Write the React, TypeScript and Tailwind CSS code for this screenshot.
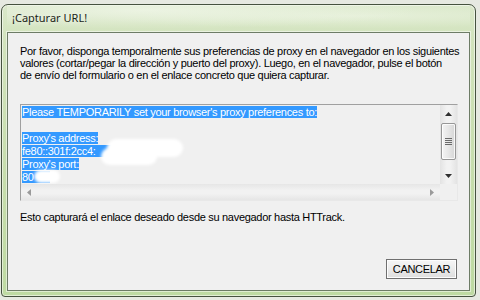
import type { ReactNode } from "react";

const sans = "font-['Liberation_Sans',Arial,sans-serif]";

const Sel = ({ children }: { children: ReactNode }) => (
  <span className="bg-[#3399ff] text-white">{children}</span>
);

const Arrow = ({ dir, gray }: { dir: "up" | "down" | "left" | "right"; gray?: boolean }) => {
  const pts = {
    up: "0,4 7,4 3.5,0",
    down: "0,0 7,0 3.5,4",
    left: "4,0 4,7 0,3.5",
    right: "0,0 0,7 4,3.5",
  }[dir];
  const vert = dir === "up" || dir === "down";
  return (
    <svg width={vert ? 7 : 4} height={vert ? 4 : 7} className="block">
      <polygon points={pts} fill={gray ? "#9a9a9a" : "#303030"} />
    </svg>
  );
};

export default function App() {
  return (
    <div className="w-[480px] h-[300px] bg-[#e6e9e1] pt-[4px] pl-[1px] overflow-hidden">
      {/* window frame */}
      <div className="w-[475px] h-[293px] flex flex-col rounded-t-[7px] rounded-b-[4px] border border-[#46523f] bg-[linear-gradient(180deg,#dae8ca_0%,#d2e3bd_12%,#c6ddac_60%,#bedaa2_100%)] shadow-[inset_0_0_0_1px_rgba(255,255,255,0.55)] px-[5px] pb-[5px]">
        {/* title bar */}
        <div className="h-[27px] flex items-center pl-[5px] pb-[1px] bg-[radial-gradient(ellipse_at_30%_20%,rgba(240,246,232,0.8),transparent_60%),radial-gradient(ellipse_at_75%_40%,rgba(236,244,226,0.7),transparent_55%)]">
          <span className="font-['Noto_Sans',sans-serif] text-[11px] text-[#1c2618] [text-shadow:0_0_6px_rgba(255,255,255,0.9)]">
            ¡Capturar URL!
          </span>
        </div>

        {/* client area */}
        <div className={`flex-1 flex flex-col border border-[#6d7c66] bg-[#f0f0f0] shadow-[0_0_0_1px_rgba(255,255,255,0.5)] px-[12px] pt-[12px] pb-[11px] text-[11px] tracking-[-0.3px] text-black ${sans}`}>
          <p className="leading-[12px] whitespace-nowrap">
            Por favor, disponga temporalmente sus preferencias de proxy en el navegador en los siguientes
            <br />
            valores (cortar/pegar la dirección y puerto del proxy). Luego, en el navegador, pulse el botón
            <br />
            de envío del formulario o en el enlace concreto que quiera capturar.
          </p>

          {/* read-only text box */}
          <div className="mt-[23px] w-[438px] h-[97px] flex flex-col border border-t-[#a0a0a0] border-l-[#a0a0a0] border-b-[#e8e8e8] border-r-[#e8e8e8] bg-[#f0f0f0]">
            <div className="flex h-[79px]">
              <div className="relative flex-1 overflow-hidden pl-[1px] pt-[1px] leading-[13px] whitespace-pre">
                <div><Sel>Please TEMPORARILY set your browser's proxy preferences to:</Sel></div>
                <div>&nbsp;</div>
                <div><Sel>Proxy's address:</Sel></div>
                <div><Sel>{"fe80::301f:2cc4:            "}</Sel></div>
                <div><Sel>Proxy's port:</Sel></div>
                <div><Sel>{"80      "}</Sel></div>
                {/* redaction blots */}
                <div className="absolute left-[86px] top-[34px] w-[76px] h-[18px] rounded-full bg-white blur-[1.5px]" />
                <div className="absolute left-[80px] top-[43px] w-[56px] h-[17px] rounded-full bg-white blur-[1.5px]" />
                <div className="absolute left-[13px] top-[65px] w-[26px] h-[13px] rounded-full bg-white blur-[1.5px]" />
              </div>
              {/* vertical scrollbar */}
              <div className="w-[17px] flex flex-col items-center bg-[linear-gradient(90deg,#e3e3e3,#f2f2f2_40%,#f2f2f2_60%,#e3e3e3)]">
                <div className="h-[17px] flex items-center justify-center"><Arrow dir="up" /></div>
                <div className="mt-[1px] w-[15px] h-[37px] rounded-[2px] border border-[#979797] bg-[linear-gradient(90deg,#f4f4f4,#e6e6e6_50%,#d6d6d6)] flex flex-col items-center justify-center gap-[1px] shadow-[inset_0_0_0_1px_rgba(255,255,255,0.8)]">
                  <div className="w-[7px] h-[1px] bg-[#6a6a6a]" />
                  <div className="w-[7px] h-[1px] bg-[#6a6a6a]" />
                  <div className="w-[7px] h-[1px] bg-[#6a6a6a]" />
                  <div className="w-[7px] h-[1px] bg-[#6a6a6a]" />
                </div>
                <div className="flex-1" />
                <div className="h-[16px] flex items-center justify-center"><Arrow dir="down" /></div>
              </div>
            </div>
            {/* horizontal scrollbar */}
            <div className="h-[16px] flex">
              <div className="flex-1 flex items-center justify-between px-[6px] bg-[linear-gradient(180deg,#e6e6e6,#f2f2f2_40%,#f2f2f2_60%,#e6e6e6)]">
                <Arrow dir="left" gray />
                <Arrow dir="right" gray />
              </div>
              <div className="w-[17px] bg-[#f0f0f0]" />
            </div>
          </div>

          <p className="mt-[10px] leading-[12px]">
            Esto capturará el enlace deseado desde su navegador hasta HTTrack.
          </p>

          <div className="mt-auto flex justify-end">
            <button className="w-[71px] h-[20px] border border-[#6f6f6f] bg-[linear-gradient(180deg,#f6f6f6,#ebebeb_50%,#dddddd)] shadow-[inset_0_0_0_1px_#fdfdfd] text-[11px] leading-none tracking-[-0.3px] text-black">
              CANCELAR
            </button>
          </div>
        </div>
      </div>
    </div>
  );
}
